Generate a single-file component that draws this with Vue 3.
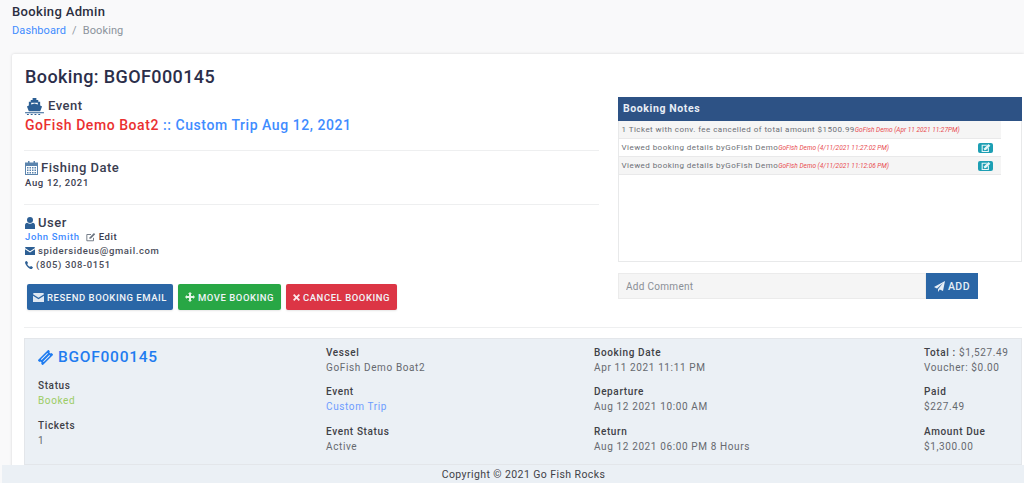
<template>
  <div class="page">
    <header class="top">
      <div class="crumb-title">Booking Admin</div>
      <div class="crumbs"><a class="blue">Dashboard</a><span class="sep">/</span><span class="cur">Booking</span></div>
    </header>
    <main class="card">
      <h1 class="title">Booking: BGOF000145</h1>
      <div class="cols">
        <section class="left">
          <div class="head event-head">
            <svg class="ship" viewBox="0 0 20 18" width="19" height="17"><path fill="#2d5f94" d="M8 0h4v2h2v2h2v4l2 1-2 5H4L2 9l2-1V4h2V2h2zM6.500 5v1.800L10 5.800l3.500 1V5z"/><path fill="#2d5f94" d="M0 15h20v1.200H0zM2 17h2v1H2zm4 0h2v1H6zm4 0h2v1h-2zm4 0h2v1h-2z"/></svg>
            <span>Event</span>
          </div>
          <div class="event-line"><span class="red">GoFish Demo Boat2</span> <span class="blue">:: Custom Trip Aug 12, 2021</span></div>
          <hr class="rule r1" />
          <div class="head">
            <svg viewBox="0 0 13 14" width="13" height="14"><path fill="#5b84ad" d="M3 0h1.500v1.500h4V0H10v1.500h3V14H0V1.500h3zM1 5v8h11V5zm1 1h1.500v1.500H2zm2.500 0H6v1.500H4.500zM7 6h1.500v1.500H7zm2.500 0H11v1.500H9.500zM2 8.500h1.500V10H2zm2.500 0H6V10H4.500zm2.500 0h1.500V10H7zm2.500 0H11V10H9.500zM2 11h1.500v1.500H2zm2.500 0H6v1.500H4.500zM7 11h1.500v1.500H7zm2.500 0H11v1.500H9.500z"/></svg>
            <span>Fishing Date</span>
          </div>
          <div class="date">Aug 12, 2021</div>
          <hr class="rule r2" />
          <div class="head">
            <svg viewBox="0 0 10 12" width="10" height="12"><circle cx="5" cy="3" r="3" fill="#2d5f94"/><path fill="#2d5f94" d="M0 12V8.500C0 6.800 1 6 2.200 5.800 3 6.500 4 6.800 5 6.800S7 6.500 7.800 5.800C9 6 10 6.800 10 8.500V12z"/></svg>
            <span>User</span>
          </div>
          <div class="info name-row">
            <a class="blue">John Smith</a>
            <svg class="edit" viewBox="0 0 12 11" width="10" height="10"><path fill="none" stroke="#6b7480" stroke-width="1.100" d="M9 6.500V10H1V2.500h5"/><path fill="#6b7480" d="M4.500 5.800 9.500.8l1.500 1.500-5 5-2 .5z"/></svg>
            <span class="edit-txt">Edit</span>
          </div>
          <div class="info">
            <svg class="ico" viewBox="0 0 10 8" width="10" height="8"><path fill="#2d5f94" d="M0 1a1 1 0 0 1 1-1h8a1 1 0 0 1 1 1L5 4.200zM0 2.300 5 5.500l5-3.200V8H0z"/></svg>
            <span>spidersideus@gmail.com</span>
          </div>
          <div class="info">
            <svg class="ico phone" viewBox="0 0 9 9" width="8" height="8"><path fill="#2d5f94" d="M2 0 3.500 2.200 2.500 3.300C3 4.700 4.300 6 5.700 6.500L6.800 5.500 9 7 8 8.600C7.500 9 6.500 9 5 8.300 2.800 7.200 1.200 5 .4 3.200 0 2 0 1 .5.700z"/></svg>
            <span>(805) 308-0151</span>
          </div>
          <div class="actions">
            <button class="btn b-blue">
              <svg viewBox="0 0 10 8" width="11" height="9"><path fill="#dfe8f2" d="M0 1a1 1 0 0 1 1-1h8a1 1 0 0 1 1 1L5 4.200zM0 2.300 5 5.500l5-3.200V8H0z"/></svg>
              RESEND BOOKING EMAIL
            </button>
            <button class="btn b-green">
              <svg viewBox="0 0 10 10" width="10" height="10"><path fill="#e3f3e6" d="M5 0l2 2H6v2h2V3l2 2-2 2V6H6v2h1l-2 2-2-2h1V6H2v1L0 5l2-2v1h2V2H3z"/></svg>
              MOVE BOOKING
            </button>
            <button class="btn b-red">
              <svg viewBox="0 0 8 8" width="7" height="7"><path fill="#fbe9eb" d="M1.500 0 4 2.500 6.500 0 8 1.500 5.500 4 8 6.500 6.500 8 4 5.500 1.500 8 0 6.500 2.500 4 0 1.500z"/></svg>
              CANCEL BOOKING
            </button>
          </div>
        </section>
        <section class="right">
          <div class="notes">
            <div class="notes-head">Booking Notes</div>
            <div class="notes-body">
              <div v-for="(n, i) in notes" :key="i" class="note" :class="{ odd: i % 2 === 0 }">
                <span class="note-text">{{ n.text }}</span><em class="note-meta">{{ n.meta }}</em>
                <span v-if="n.edit" class="note-btn">
                  <svg viewBox="0 0 12 11" width="10" height="8"><path fill="#e6f6f8" d="M0 1h8L6.500 2.500H1.500v7h7V6L10 4.500V11H0z"/><path fill="#e6f6f8" d="M3.500 5.800 9.500 0 12 2.300 6 8.200l-2.800.4z"/></svg>
                </span>
              </div>
            </div>
          </div>
          <div class="comment">
            <input class="comment-input" placeholder="Add Comment" />
            <button class="add">
              <svg viewBox="0 0 11 11" width="11" height="11"><path fill="#e6eef6" d="M11 0 9 10 5.800 8.600 4 11V8.200L9 2 3 7.400 0 6z"/></svg>
              ADD
            </button>
          </div>
        </section>
      </div>
      <hr class="rule r3" />
      <div class="summary">
        <div class="s-col c1">
          <div class="ref">
            <svg viewBox="0 0 15 15" width="15" height="15">
              <g transform="rotate(-45 7.500 7.500)">
                <path fill="#1f7cf0" d="M0 4h15v2.200a1.300 1.300 0 0 0 0 2.600V11H0V8.800a1.300 1.300 0 0 0 0-2.600z"/>
                <path stroke="#ebf0f5" stroke-width="1" d="M3 6h9M3 9h9"/>
              </g>
            </svg>
            BGOF000145
          </div>
          <div class="item"><b>Status</b><span class="green">Booked</span></div>
          <div class="item"><b>Tickets</b><span>1</span></div>
        </div>
        <div class="s-col c2">
          <div class="item"><b>Vessel</b><span>GoFish Demo Boat2</span></div>
          <div class="item"><b>Event</b><span class="blue">Custom Trip</span></div>
          <div class="item"><b>Event Status</b><span>Active</span></div>
        </div>
        <div class="s-col c3">
          <div class="item"><b>Booking Date</b><span>Apr 11 2021 11:11 PM</span></div>
          <div class="item"><b>Departure</b><span>Aug 12 2021 10:00 AM</span></div>
          <div class="item"><b>Return</b><span>Aug 12 2021 06:00 PM 8 Hours</span></div>
        </div>
        <div class="s-col c4">
          <div class="item"><span><b>Total :</b> $1,527.49</span><span>Voucher: $0.00</span></div>
          <div class="item"><b>Paid</b><span>$227.49</span></div>
          <div class="item"><b>Amount Due</b><span>$1,300.00</span></div>
        </div>
      </div>
    </main>
    <footer class="foot">Copyright © 2021 Go Fish Rocks</footer>
  </div>
</template>

<script setup>
const notes = [
  { text: '1 Ticket with conv. fee cancelled of total amount $1500.99', meta: 'GoFish Demo (Apr 11 2021 11:27PM)', edit: false },
  { text: 'Viewed booking details byGoFish Demo', meta: 'GoFish Demo (4/11/2021 11:27:02 PM)', edit: true },
  { text: 'Viewed booking details byGoFish Demo', meta: 'GoFish Demo (4/11/2021 11:12:06 PM)', edit: true }
]
</script>

<style>
html, body { margin: 0; padding: 0; background: #f9f9fa; overflow: hidden; }
</style>

<style scoped>
.page {
  height: 483px;
  overflow: hidden;
  font-family: Roboto, "Liberation Sans", sans-serif;
  color: #2c2f3f;
  letter-spacing: 0.6px;
  display: flex;
  flex-direction: column;
  position: relative;
}
.blue { color: #3f8cff; }
.red { color: #ea3030; }
.green { color: #9ccc65; }
.top { height: 54px; padding: 4px 12px 0; box-sizing: border-box; }
.crumb-title { font-size: 13px; font-weight: 500; line-height: 16px; color: #2b2e40; letter-spacing: 0.35px; }
.crumbs { font-size: 11px; line-height: 14px; margin-top: 4px; letter-spacing: 0.1px; }
.sep { color: #8f98a3; margin: 0 6px; }
.cur { color: #8b939c; }
.card {
  margin-left: 12px;
  background: #fff;
  padding: 13px 2px 0 13px;
  box-shadow: 0 0 3px rgba(0, 0, 0, 0.15);
  border-radius: 2px 0 0 0;
  flex: 1;
  min-height: 0;
}
.title { margin: 0; font-size: 18px; line-height: 20px; font-weight: 500; color: #2b2e4a; letter-spacing: 0.4px; }
.cols { display: flex; margin-top: 9px; }
.left { width: 574px; margin-right: 19px; flex: none; }
.right { width: 404px; flex: none; padding-top: 7px; margin-top: -6px; }
.head { display: flex; align-items: center; gap: 3px; font-size: 13px; font-weight: 500; color: #3a3d50; line-height: 16px; letter-spacing: 0.5px; }
.event-head { gap: 4px; height: 20px; }
.event-line { font-size: 14px; font-weight: 500; line-height: 18px; letter-spacing: 0.56px; }
.rule { border: 0; border-top: 1px solid #eeeff0; margin: 0; }
.r1 { margin: 16px 0 9px -1px; }
.date { font-size: 9.500px; font-weight: 500; line-height: 12px; color: #3a3d50; margin-top: 1px; letter-spacing: 0.65px; }
.r2 { margin: 15px 0 10px -1px; }
.info { display: flex; align-items: center; font-size: 9.500px; font-weight: 500; line-height: 14px; color: #4a4d5a; letter-spacing: 0.62px; gap: 3px; }
.name-row { margin-top: -1px; }
.edit { margin-left: 3px; }
.edit-txt { color: #3a3d50; }
.ico { flex: none; }
.actions { display: flex; gap: 5px; margin: 12px 0 0 2px; }
.btn {
  border: 0;
  height: 26px;
  border-radius: 2px;
  color: #f0f4f8;
  font-family: inherit;
  font-size: 9.500px;
  font-weight: 500;
  letter-spacing: 0.55px;
  display: flex;
  align-items: center;
  justify-content: center;
  gap: 3px;
  padding: 0;
  box-shadow: 0 1px 2px rgba(0, 0, 0, 0.1);
}
.b-blue { background: #2a66a6; width: 146px; }
.b-green { background: #28a745; width: 103px; }
.b-red { background: #dc3545; width: 111px; }
.notes { border: 1px solid #e8e9ea; border-top: 0; height: 165px; box-sizing: border-box; }
.notes-head { background: #2d5285; color: #e8eef6; font-size: 10.500px; font-weight: 700; height: 24px; line-height: 23px; padding-left: 5px; margin: 0 -1px; }
.notes-body { width: 382px; }
.note {
  display: flex;
  align-items: center;
  height: 18px;
  font-size: 8px;
  padding-left: 2.500px;
  box-sizing: border-box;
  border-bottom: 1px solid #e9e9ea;
  color: #6c6f75;
  letter-spacing: 0.45px;
  white-space: nowrap;
}
.note.odd { background: #f5f5f5; }
.note-meta { color: #e84b50; font-size: 6.500px; letter-spacing: 0; }
.note-btn { margin-left: auto; margin-right: 8px; background: #1d9fb4; width: 15px; height: 10px; border-radius: 2px; display: flex; align-items: center; justify-content: center; }
.comment { display: flex; margin-top: 11px; }
.comment-input {
  width: 308px;
  height: 26px;
  box-sizing: border-box;
  background: #f5f5f5;
  border: 1px solid #ebebeb;
  padding: 0 7px;
  font-family: inherit;
  font-size: 10px;
  letter-spacing: 0.3px;
  outline: 0;
}
.comment-input::placeholder { color: #8a8f96; opacity: 1; }
.add {
  width: 52px;
  height: 26px;
  border: 0;
  background: #2a66a6;
  color: #e6eef6;
  font-family: inherit;
  font-size: 10.500px;
  font-weight: 500;
  letter-spacing: 0.5px;
  display: flex;
  align-items: center;
  justify-content: center;
  gap: 3px;
  padding: 0;
}
.r3 { margin: 17px 0 0 -1px; }
.summary {
  margin: 10px 0 0 -1px;
  background: #ebf0f5;
  border: 1px solid #e3e6ea;
  height: 127px;
  box-sizing: border-box;
  display: flex;
  padding: 6px 0 0 13px;
}
.s-col { display: flex; flex-direction: column; gap: 9.300px; flex: none; }
.c1 { width: 288px; }
.c2 { width: 268px; }
.c3 { width: 330px; }
.c4 { flex: 1; }
.ref { display: flex; align-items: center; gap: 5px; color: #1f7cf0; font-size: 15.500px; font-weight: 500; line-height: 20px; letter-spacing: 0.75px; margin: 2px 0; }
.item { display: flex; flex-direction: column; font-size: 10px; line-height: 15px; color: #66696f; letter-spacing: 0.62px; }
.item b { font-weight: 500; color: #3f4147; }
.item .blue { color: #6d9cff; }
.item .green { color: #9ccc65; }
.foot {
  position: absolute;
  left: 2px;
  right: 0;
  bottom: 0;
  height: 18px;
  line-height: 19px;
  background: #ebf0f5;
  text-align: center;
  font-size: 10.500px;
  letter-spacing: 0.42px;
  padding-left: 21px;
  box-sizing: border-box;
  color: #3f4147;
}
</style>
